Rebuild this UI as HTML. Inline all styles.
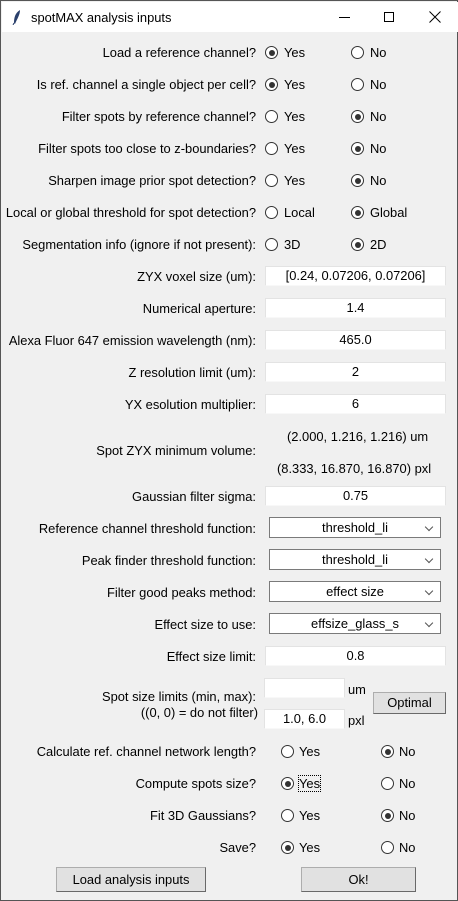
<!DOCTYPE html>
<html><head><meta charset="utf-8"><style>
*{box-sizing:border-box;margin:0;padding:0}
body{width:458px;height:901px;overflow:hidden;background:#f0f0f0;font-family:"Liberation Sans",sans-serif;font-size:12.9px;color:#000;position:relative}
.win{position:absolute;left:0;top:0;width:458px;height:901px;border:1px solid #555;background:#f0f0f0}
.tb{position:absolute;left:1px;top:1px;width:456px;height:30px;background:#fff}
.l{position:absolute;right:201px;white-space:nowrap;line-height:15px}
.t{position:absolute;white-space:nowrap;line-height:15px}
.r{position:absolute;width:13px;height:13px;border:1px solid #333;border-radius:50%;background:#fff}
.r.on::after{content:"";position:absolute;left:2.5px;top:2.5px;width:6px;height:6px;border-radius:50%;background:#333}
.e{position:absolute;left:264px;width:181px;height:20px;background:#fff;border:1px solid #e3e3e3;border-bottom-color:#f8f8f8;text-align:center;line-height:18px}
.c{position:absolute;left:268px;width:172px;height:21px;background:#fff;border:1px solid #7a7a7a;text-align:center;line-height:19px}
.c::after{content:"";position:absolute;right:8px;top:6px;width:5px;height:5px;border-right:1px solid #555;border-bottom:1px solid #555;transform:rotate(45deg)}
.b{position:absolute;background:#e1e1e1;border:1px solid #adadad;border-right-color:#696969;border-bottom-color:#696969;text-align:center}
</style></head><body><div class="win">
<div class="tb">
<svg style="position:absolute;left:10px;top:7px" width="10" height="16" viewBox="0 0 10 16"><path d="M8 1 C3 4 2 9 2 14 L3 15 C5 10 8 6 8 1Z" fill="#2a3f6b"/><path d="M2 14 L1 16" stroke="#2a3f6b"/></svg>
<div class="t" style="left:29px;top:8px">spotMAX analysis inputs</div>
<div style="position:absolute;left:337px;top:15px;width:11px;height:1px;background:#000"></div>
<div style="position:absolute;left:382px;top:10px;width:10px;height:10px;border:1px solid #000"></div>
<svg style="position:absolute;left:427px;top:9px" width="12" height="12"><path d="M0.5 0.5L11.5 11.5M11.5 0.5L0.5 11.5" stroke="#000"/></svg>
</div>

<div class="l" style="top:44px">Load a reference channel?</div>
<div class="r on" style="left:264px;top:45px"></div><div class="t" style="left:283px;top:44px">Yes</div>
<div class="r" style="left:350px;top:45px"></div><div class="t" style="left:369px;top:44px">No</div>

<div class="l" style="top:76px">Is ref. channel a single object per cell?</div>
<div class="r on" style="left:264px;top:77px"></div><div class="t" style="left:283px;top:76px">Yes</div>
<div class="r" style="left:350px;top:77px"></div><div class="t" style="left:369px;top:76px">No</div>

<div class="l" style="top:108px">Filter spots by reference channel?</div>
<div class="r" style="left:264px;top:109px"></div><div class="t" style="left:283px;top:108px">Yes</div>
<div class="r on" style="left:350px;top:109px"></div><div class="t" style="left:369px;top:108px">No</div>

<div class="l" style="top:140px">Filter spots too close to z-boundaries?</div>
<div class="r" style="left:264px;top:141px"></div><div class="t" style="left:283px;top:140px">Yes</div>
<div class="r on" style="left:350px;top:141px"></div><div class="t" style="left:369px;top:140px">No</div>

<div class="l" style="top:172px">Sharpen image prior spot detection?</div>
<div class="r" style="left:264px;top:173px"></div><div class="t" style="left:283px;top:172px">Yes</div>
<div class="r on" style="left:350px;top:173px"></div><div class="t" style="left:369px;top:172px">No</div>

<div class="l" style="top:204px">Local or global threshold for spot detection?</div>
<div class="r" style="left:264px;top:205px"></div><div class="t" style="left:283px;top:204px">Local</div>
<div class="r on" style="left:350px;top:205px"></div><div class="t" style="left:369px;top:204px">Global</div>

<div class="l" style="top:236px">Segmentation info (ignore if not present):</div>
<div class="r" style="left:264px;top:237px"></div><div class="t" style="left:283px;top:236px">3D</div>
<div class="r on" style="left:350px;top:237px"></div><div class="t" style="left:369px;top:236px">2D</div>

<div class="l" style="top:268px">ZYX voxel size (um):</div><div class="e" style="top:265px">[0.24, 0.07206, 0.07206]</div>
<div class="l" style="top:300px">Numerical aperture:</div><div class="e" style="top:297px">1.4</div>
<div class="l" style="top:332px">Alexa Fluor 647 emission wavelength (nm):</div><div class="e" style="top:329px">465.0</div>
<div class="l" style="top:364px">Z resolution limit (um):</div><div class="e" style="top:361px">2</div>
<div class="l" style="top:396px">YX esolution multiplier:</div><div class="e" style="top:393px">6</div>

<div class="l" style="top:442px">Spot ZYX minimum volume:</div>
<div class="t" style="left:286px;top:428px">(2.000, 1.216, 1.216) um</div>
<div class="t" style="left:276px;top:460px">(8.333, 16.870, 16.870) pxl</div>

<div class="l" style="top:488px">Gaussian filter sigma:</div><div class="e" style="top:485px">0.75</div>

<div class="l" style="top:520px">Reference channel threshold function:</div><div class="c" style="top:516px">threshold_li</div>
<div class="l" style="top:552px">Peak finder threshold function:</div><div class="c" style="top:548px">threshold_li</div>
<div class="l" style="top:584px">Filter good peaks method:</div><div class="c" style="top:580px">effect size</div>
<div class="l" style="top:616px">Effect size to use:</div><div class="c" style="top:612px">effsize_glass_s</div>

<div class="l" style="top:648px">Effect size limit:</div><div class="e" style="top:645px">0.8</div>

<div class="l" style="top:688px">Spot size limits (min, max):</div>
<div class="l" style="top:704px;right:199px">((0, 0) = do not filter)</div>
<div class="e" style="top:677px;left:263px;width:81px"></div><div class="t" style="left:347px;top:681px">um</div>
<div class="e" style="top:708px;left:263px;width:81px">1.0, 6.0</div><div class="t" style="left:347px;top:712px">pxl</div>
<div class="b" style="left:372px;top:691px;width:73px;height:22px;line-height:20px">Optimal</div>

<div class="l" style="top:743px">Calculate ref. channel network length?</div>
<div class="r" style="left:280px;top:744px"></div><div class="t" style="left:298px;top:743px">Yes</div>
<div class="r on" style="left:380px;top:744px"></div><div class="t" style="left:398px;top:743px">No</div>

<div class="l" style="top:775px">Compute spots size?</div>
<div class="r on" style="left:280px;top:776px"></div><div class="t" style="left:298px;top:775px;outline:1px dotted #000">Yes</div>
<div class="r" style="left:380px;top:776px"></div><div class="t" style="left:398px;top:775px">No</div>

<div class="l" style="top:807px">Fit 3D Gaussians?</div>
<div class="r" style="left:280px;top:808px"></div><div class="t" style="left:298px;top:807px">Yes</div>
<div class="r on" style="left:380px;top:808px"></div><div class="t" style="left:398px;top:807px">No</div>

<div class="l" style="top:839px">Save?</div>
<div class="r on" style="left:280px;top:840px"></div><div class="t" style="left:298px;top:839px">Yes</div>
<div class="r" style="left:380px;top:840px"></div><div class="t" style="left:398px;top:839px">No</div>

<div class="b" style="left:55px;top:866px;width:150px;height:25px;line-height:23px">Load analysis inputs</div>
<div class="b" style="left:300px;top:866px;width:115px;height:25px;line-height:23px">Ok!</div>
</div></body></html>
